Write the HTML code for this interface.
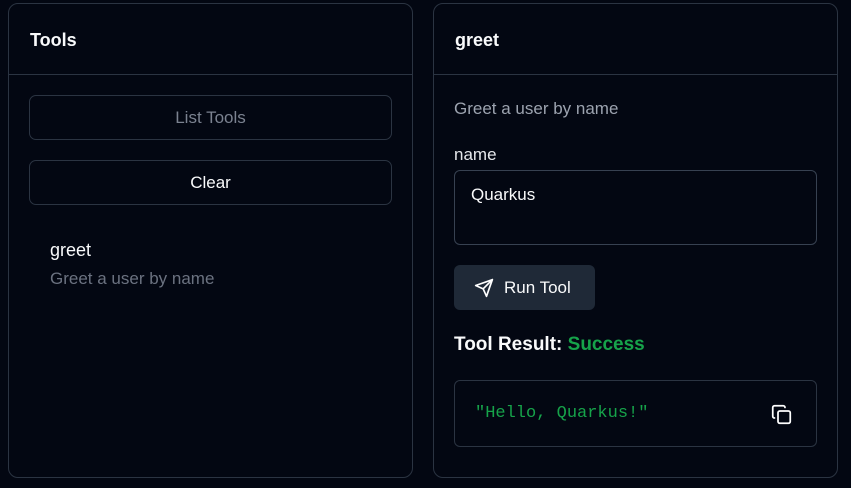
<!DOCTYPE html>
<html><head><style>
*{box-sizing:border-box;margin:0;padding:0}
body{width:851px;height:488px;background:#030712;font-family:"Liberation Sans",sans-serif;color:#f9fafb;position:relative;overflow:hidden}
.p{position:absolute;border:1px solid #2b3442;border-radius:10px;top:3px;height:475px;width:405px}
.hd{height:71px;border-bottom:1px solid #2b3442;padding:26px 21px;font-size:18px;font-weight:bold}
.a{position:absolute}
.btn{position:absolute;left:20px;width:363px;height:45px;border:1px solid #2b3442;border-radius:7px;text-align:center;line-height:43px;font-size:17px}
</style></head><body>
<div class="p" style="left:8px">
<div class="hd">Tools</div>
<div class="btn" style="top:91px;color:#7b8290">List Tools</div>
<div class="btn" style="top:156px">Clear</div>
<div class="a" style="left:41px;top:236px;font-size:18px">greet</div>
<div class="a" style="left:41px;top:265px;font-size:17px;color:#6b7280">Greet a user by name</div>
</div>
<div class="p" style="left:433px">
<div class="hd">greet</div>
<div class="a" style="left:20px;top:95px;font-size:17px;color:#9ca3af">Greet a user by name</div>
<div class="a" style="left:20px;top:141px;font-size:17px;color:#e5e7eb">name</div>
<div class="a" style="left:20px;top:166px;width:363px;height:75px;border:1px solid #374151;border-radius:6px;padding:14px 16px;font-size:17px">Quarkus</div>
<div class="a" style="left:20px;top:261px;width:141px;height:45px;background:#1f2937;border-radius:6px;font-size:17px;line-height:45px;padding-left:50px">Run Tool
<svg class="a" style="left:20px;top:13px" width="20" height="20" viewBox="0 0 24 24" fill="none" stroke="#fff" stroke-width="2" stroke-linecap="round" stroke-linejoin="round"><path d="M22 2 11 13"/><path d="M22 2 15 22 11 13 2 9 22 2z"/></svg></div>
<div class="a" style="left:20px;top:330px;font-size:19px;font-weight:bold">Tool Result: <span style="color:#16a34a">Success</span></div>
<div class="a" style="left:20px;top:376px;width:363px;height:67px;border:1px solid #2b3442;border-radius:6px;padding:23px 20px;font-family:'Liberation Mono',monospace;font-size:17px;color:#16a34a">"Hello, Quarkus!"
<svg class="a" style="left:316px;top:23px" width="21" height="21" viewBox="0 0 24 24" fill="none" stroke="#fff" stroke-width="2" stroke-linecap="round" stroke-linejoin="round"><rect x="8" y="8" width="14" height="14" rx="2"/><path d="M4 16c-1.1 0-2-.9-2-2V4c0-1.1.9-2 2-2h10c1.1 0 2 .9 2 2"/></svg></div>
</div>
</body></html>
